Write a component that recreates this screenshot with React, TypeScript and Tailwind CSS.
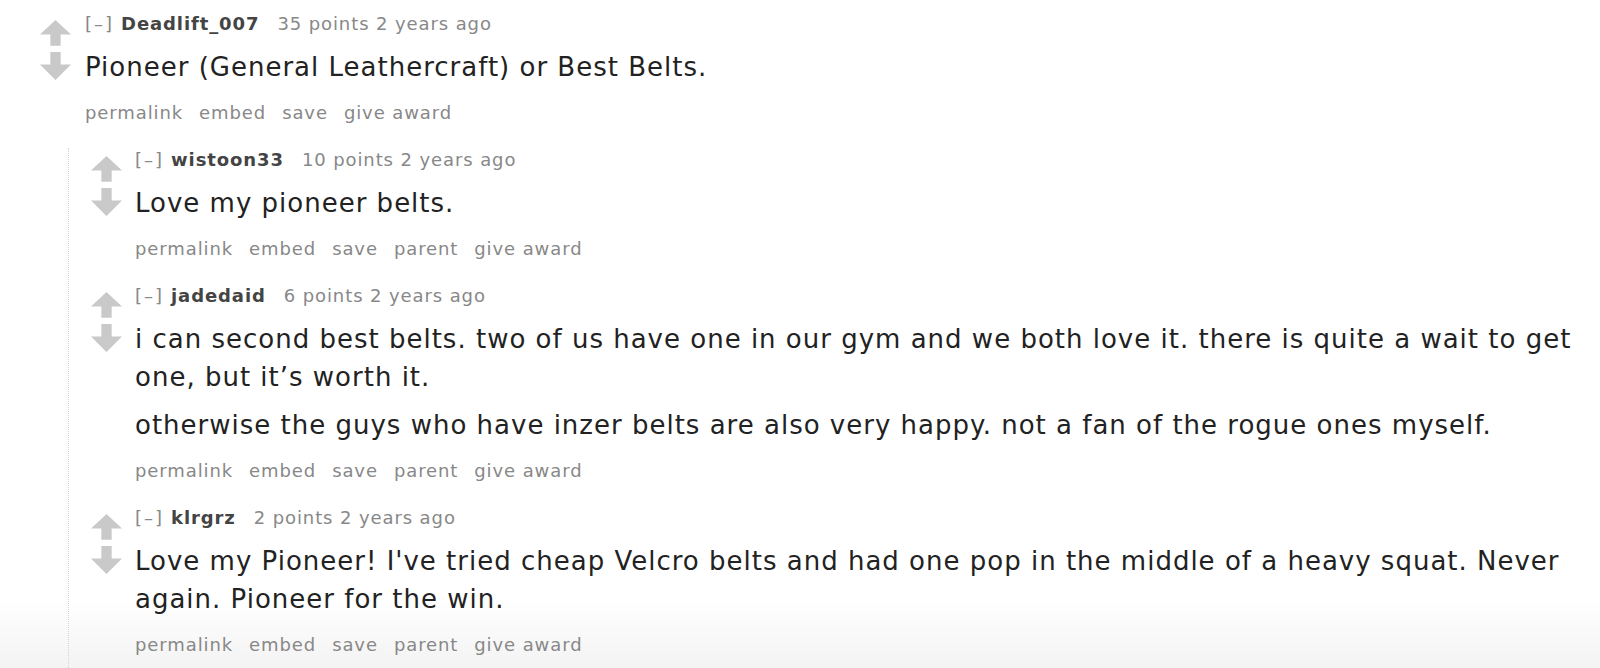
import type { ReactNode } from 'react'

type CommentData = {
  author: string
  points: number
  body: string[]
  parent?: boolean
  replies?: CommentData[]
}

const thread: CommentData = {
  author: 'Deadlift_007',
  points: 35,
  body: ['Pioneer (General Leathercraft) or Best Belts.'],
  replies: [
    {
      author: 'wistoon33',
      points: 10,
      parent: true,
      body: ['Love my pioneer belts.'],
    },
    {
      author: 'jadedaid',
      points: 6,
      parent: true,
      body: [
        'i can second best belts. two of us have one in our gym and we both love it. there is quite a wait to get one, but it’s worth it.',
        'otherwise the guys who have inzer belts are also very happy. not a fan of the rogue ones myself.',
      ],
    },
    {
      author: 'klrgrz',
      points: 2,
      parent: true,
      body: [
        "Love my Pioneer! I've tried cheap Velcro belts and had one pop in the middle of a heavy squat. Never again. Pioneer for the win.",
      ],
    },
  ],
}

function Arrows() {
  return (
    <svg width="31" height="60" viewBox="0 0 30 58" className="mt-[8px] shrink-0">
      <path d="M15 0 L30 14 L20 14 L20 25 L10 25 L10 14 L0 14 Z" fill="#c9c9c9" />
      <path d="M10 31 L20 31 L20 43 L30 43 L15 58 L0 43 L10 43 Z" fill="#c9c9c9" />
    </svg>
  )
}

function Buttons({ parent }: { parent?: boolean }) {
  const items = ['permalink', 'embed', 'save', ...(parent ? ['parent'] : []), 'give award']
  return (
    <ul className="mt-[15px] flex gap-[16px] text-[18px] leading-[24px] tracking-[0.9px] text-[#888]">
      {items.map((item) => (
        <li key={item}>{item}</li>
      ))}
    </ul>
  )
}

function Comment({ c, gap, children }: { c: CommentData; gap: string; children?: ReactNode }) {
  return (
    <div>
      <div className={`flex ${gap}`}>
        <Arrows />
        <div className="min-w-0 flex-1">
          <p className="text-[18px] leading-[24px] tracking-[0.9px] text-[#888]">
            <span className="tracking-[2px]">[–]</span>
            <span className="ml-[7px] font-bold text-[#444]">{c.author}</span>
            <span className="ml-[18px]">{c.points} points 2 years ago</span>
          </p>
          <div className="mt-[12px] flex flex-col gap-[10px] text-[26px] leading-[38px] tracking-[1px] text-[#222]">
            {c.body.map((para, i) => (
              <p key={i}>{para}</p>
            ))}
          </div>
          <Buttons parent={c.parent} />
        </div>
      </div>
      {children}
    </div>
  )
}

export default function App() {
  return (
    <div
      className="min-h-[668px] bg-[linear-gradient(to_bottom,#ffffff_0px,#ffffff_600px,#f3f3f3_668px)] pt-[12px] pl-[40px] pr-[20px]"
      style={{ fontFamily: '"DejaVu Sans", Verdana, sans-serif' }}
    >
      <Comment c={thread} gap="gap-[14px]">
        <div className="mt-[23px] ml-[28px] flex min-h-[540px] flex-col gap-[23px] border-l border-dotted border-[#d4d4d4] pl-[22px]">
          {thread.replies?.map((r) => (
            <Comment key={r.author} c={r} gap="gap-[13px]" />
          ))}
        </div>
      </Comment>
    </div>
  )
}
